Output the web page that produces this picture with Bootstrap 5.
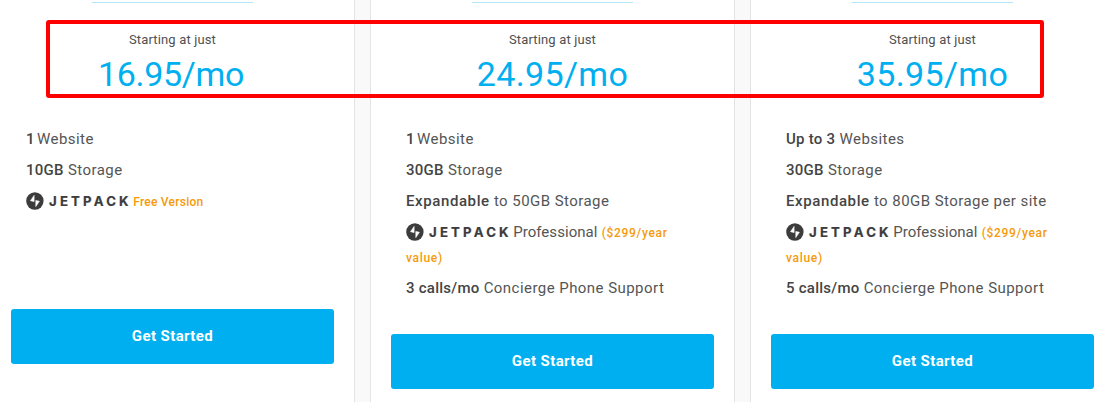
<!DOCTYPE html>
<html lang="en">
<head>
<meta charset="utf-8">
<title>Plans</title>
<link rel="stylesheet" href="https://cdn.jsdelivr.net/npm/bootstrap@5.3.0/dist/css/bootstrap.min.css">
<style>
body{font-family:Roboto,"Liberation Sans",sans-serif;background:#f9f9f9;color:#444;height:402px;overflow:hidden}
.plans{gap:15px;margin-left:-10px;height:402px}
.plan{flex:0 0 365px;background:#fff;border:1px solid #e4e4e4;border-width:0 1px;padding:0 20px}
.rule{width:161px;height:1px;margin-top:2px;background:#b3e5fb}
.start{font-size:13px;line-height:20px;margin-top:27px;letter-spacing:.15px;color:#505050}
.price{font-size:34px;line-height:40px;margin-top:4px;color:#00aff0;font-weight:400;letter-spacing:.35px}
.price.tight{letter-spacing:-.3px;padding-right:3px}
.features{font-size:15px;line-height:25px;margin:33px 0 33px;padding:0 15px;min-height:149px;color:#555;letter-spacing:.45px}
.features li+li{margin-top:6px}
.features b{font-weight:500;color:#444;letter-spacing:.25px}
.features .one{margin-right:-2px}
.features .wide{letter-spacing:.6px}
.edition{letter-spacing:.05px}
.note{font-size:12px;line-height:12px;font-weight:500;color:#f49b0b;letter-spacing:.25px}
.value{letter-spacing:.7px}
.logo{width:103px;height:18px;margin:-4px 0 -4px;vertical-align:0}
.go{height:55px;line-height:55px;padding:0;border:0;border-radius:3px;background:#00aff0;color:#fff;font-size:15px;font-weight:700;letter-spacing:.4px}
.marker{left:46px;top:20px;width:998px;height:78px;border:4px solid #f00;border-radius:3px}
</style>
<script src="https://cdn.jsdelivr.net/npm/bootstrap@5.3.0/dist/js/bootstrap.bundle.min.js"></script>
</head>
<body class="position-relative">
<svg class="d-none">
<symbol id="jetpack" viewBox="0 0 103 18">
<circle cx="8.9" cy="9" r="8.7" fill="#3c3c3c"/>
<path d="M8.1 3.4V9.6l-3.6-.9ZM9.8 14.6V8.4l3.6.9Z" fill="#fff" stroke="#fff" stroke-width=".6"/>
<text x="23" y="14" textLength="80" lengthAdjust="spacing" font-family="Inter, sans-serif" font-size="13.2" font-weight="700" fill="#3c3c3c" stroke="#3c3c3c" stroke-width=".2">JETPACK</text>
</symbol>
</svg>
<main class="d-flex plans">
<section class="plan d-flex flex-column">
<div class="rule mx-auto"></div>
<div class="start text-center">Starting at just</div>
<div class="price tight text-center">16.95/mo</div>
<ul class="features list-unstyled">
<li><b class="one">1</b> Website</li>
<li><b>10GB</b> Storage</li>
<li><svg class="logo"><use href="#jetpack"/></svg> <span class="note">Free Version</span></li>
</ul>
<a class="btn go w-100">Get Started</a>
</section>
<section class="plan d-flex flex-column">
<div class="rule mx-auto"></div>
<div class="start text-center">Starting at just</div>
<div class="price text-center">24.95/mo</div>
<ul class="features list-unstyled">
<li><b class="one">1</b> Website</li>
<li><b>30GB</b> Storage</li>
<li><b class="wide">Expandable</b> to 50GB Storage</li>
<li><svg class="logo"><use href="#jetpack"/></svg> <span class="edition">Professional</span> <span class="note value">($299/year<br>value)</span></li>
<li><b>3 calls/mo</b> Concierge Phone Support</li>
</ul>
<a class="btn go w-100">Get Started</a>
</section>
<section class="plan d-flex flex-column">
<div class="rule mx-auto"></div>
<div class="start text-center">Starting at just</div>
<div class="price text-center">35.95/mo</div>
<ul class="features list-unstyled">
<li><b>Up to 3</b> Websites</li>
<li><b>30GB</b> Storage</li>
<li><b class="wide">Expandable</b> to 80GB Storage per site</li>
<li><svg class="logo"><use href="#jetpack"/></svg> <span class="edition">Professional</span> <span class="note value">($299/year<br>value)</span></li>
<li><b>5 calls/mo</b> Concierge Phone Support</li>
</ul>
<a class="btn go w-100">Get Started</a>
</section>
</main>
<div class="marker position-absolute"></div>
</body>
</html>
